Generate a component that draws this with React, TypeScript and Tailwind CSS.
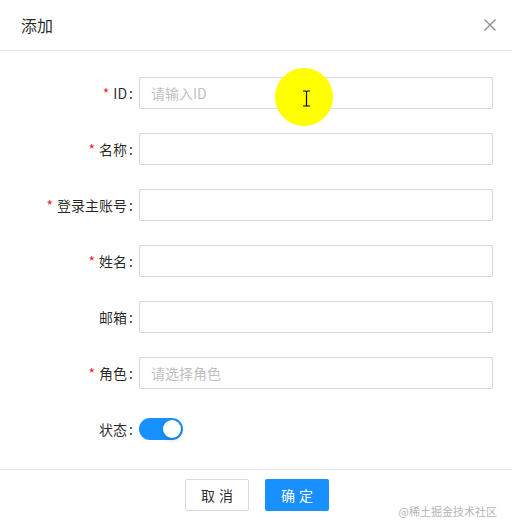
import React from "react";

type Field = {
  label: string;
  required?: boolean;
  placeholder?: string;
};

const fields: Field[] = [
  { label: "ID", required: true, placeholder: "请输入ID" },
  { label: "名称", required: true },
  { label: "登录主账号", required: true },
  { label: "姓名", required: true },
  { label: "邮箱" },
  { label: "角色", required: true, placeholder: "请选择角色" },
];

const Label: React.FC<{ text: string; required?: boolean }> = ({ text, required }) => (
  <label className="flex w-[139px] shrink-0 items-center justify-end pr-[6px] text-[14px] text-[rgba(0,0,0,0.85)]">
    {required ? <span className="mr-[4px] text-[14px] text-[#f5222d]">*</span> : null}
    {text}
    <span className="ml-[2px]">:</span>
  </label>
);

export default function App() {
  return (
    <div
      className="relative h-[532px] w-[512px] overflow-hidden bg-white"
      style={{ fontFamily: '"Noto Sans CJK SC", "Noto Sans", sans-serif' }}>
      <div className="flex h-[51px] items-center justify-between border-b border-[#ebebeb] pl-[21px] pr-[16px]">
        <span className="text-[16px] text-[rgba(0,0,0,0.85)]">添加</span>
        <svg width="14" height="14" viewBox="0 0 14 14" className="mr-[-1px]">
          <path d="M1.5 1.5 L12.5 12.5 M12.5 1.5 L1.5 12.5" stroke="#8c8c8c" strokeWidth="1.3" fill="none" />
        </svg>
      </div>

      <form className="flex flex-col pr-[19px] pt-[26px]">
        {fields.map((f) => (
          <div key={f.label} className="mb-[24px] flex h-[32px] items-center">
            <Label text={f.label} required={f.required} />
            <input
              placeholder={f.placeholder}
              className="h-[32px] w-full rounded-[2px] border border-[#d9d9d9] bg-white px-[11px] text-[14px] text-[rgba(0,0,0,0.85)] placeholder-[#bfbfbf] outline-none"
            />
          </div>
        ))}
        <div className="mb-[24px] flex h-[32px] items-center">
          <Label text="状态" />
          <button
            type="button"
            className="relative h-[22px] w-[44px] rounded-full bg-[#1890ff]">
            <span className="absolute right-[2px] top-[2px] h-[18px] w-[18px] rounded-full bg-white shadow-[0_2px_4px_rgba(0,35,11,0.2)]" />
          </button>
        </div>
      </form>

      <div className="flex justify-center gap-[16px] border-t border-[#ebebeb] pl-[2px] pt-[9px]">
        <button className="h-[32px] w-[64px] rounded-[2px] border border-[#d9d9d9] bg-white text-[14px] tracking-[4px] text-[rgba(0,0,0,0.85)] indent-[4px]">
          取消
        </button>
        <button className="h-[32px] w-[64px] rounded-[2px] bg-[#1890ff] text-[14px] tracking-[4px] text-white indent-[4px]">
          确定
        </button>
      </div>

      <span className="absolute bottom-[13px] right-[15px] text-[11px] text-[#b5b5b5]">@稀土掘金技术社区</span>

      {/* cursor highlight from the recording */}
      <div className="pointer-events-none absolute left-[275px] top-[68px] h-[58px] w-[58px] rounded-full bg-[#ffff00]" />
      <svg className="pointer-events-none absolute left-[302px] top-[90px]" width="9" height="17" viewBox="0 0 9 17">
        <path d="M1 1 H3.5 Q4.5 1 4.5 2 V15 Q4.5 16 3.5 16 H1 M8 1 H5.5 Q4.5 1 4.5 2 M4.5 15 Q4.5 16 5.5 16 H8" stroke="#000" strokeWidth="1.2" fill="none" />
      </svg>
    </div>
  );
}
